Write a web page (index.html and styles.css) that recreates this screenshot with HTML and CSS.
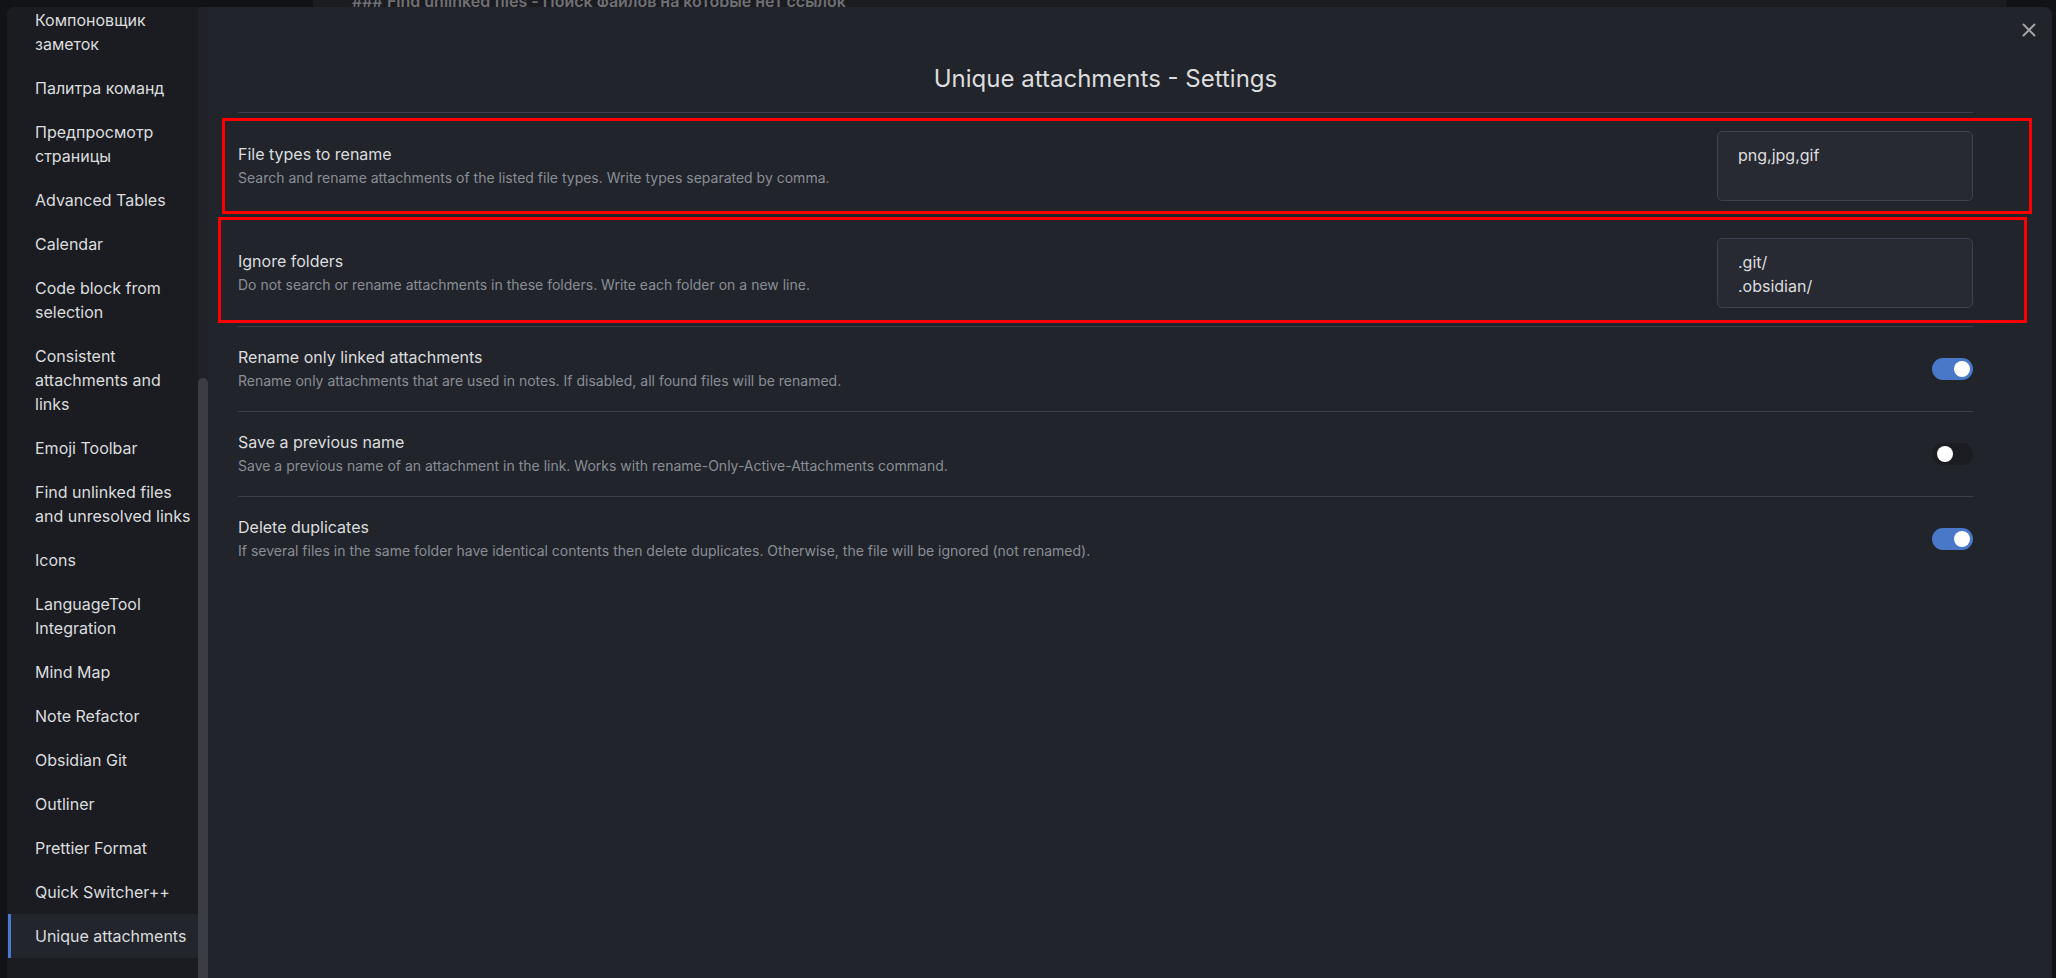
FILE: index.html
```html
<!DOCTYPE html>
<html lang="ru">
<head>
<meta charset="utf-8">
<title>Unique attachments - Settings</title>
<link rel="stylesheet" href="styles.css">
</head>
<body>
  <div class="behind">
    <div class="behind-editor">
      <div class="behind-text">### Find unlinked files - Поиск файлов на которые нет ссылок</div>
    </div>
  </div>

  <div class="modal">
    <aside class="sidebar">
      <nav class="nav">
        <div class="nav-item">Компоновщик<br>заметок</div>
        <div class="nav-item">Палитра команд</div>
        <div class="nav-item">Предпросмотр<br>страницы</div>
        <div class="nav-item">Advanced Tables</div>
        <div class="nav-item">Calendar</div>
        <div class="nav-item">Code block from<br>selection</div>
        <div class="nav-item">Consistent<br>attachments and<br>links</div>
        <div class="nav-item">Emoji Toolbar</div>
        <div class="nav-item">Find unlinked files<br>and unresolved links</div>
        <div class="nav-item">Icons</div>
        <div class="nav-item">LanguageTool<br>Integration</div>
        <div class="nav-item">Mind Map</div>
        <div class="nav-item">Note Refactor</div>
        <div class="nav-item">Obsidian Git</div>
        <div class="nav-item">Outliner</div>
        <div class="nav-item">Prettier Format</div>
        <div class="nav-item">Quick Switcher++</div>
        <div class="nav-item is-active">Unique attachments</div>
      </nav>
    </aside>
    <div class="scroll-track"><div class="scroll-thumb"></div></div>

    <section class="content">
      <button class="close" aria-label="Close">
        <svg width="14" height="14" viewBox="0 0 14 14"><path d="M1.5 1.5 L12.5 12.5 M12.5 1.5 L1.5 12.5" stroke="#a3a3a3" stroke-width="2" stroke-linecap="round" fill="none"/></svg>
      </button>
      <h2 class="title">Unique attachments - Settings</h2>

      <div class="setting">
        <div class="info">
          <div class="name">File types to rename</div>
          <div class="desc">Search and rename attachments of the listed file types. Write types separated by comma.</div>
        </div>
        <textarea class="field" readonly>png,jpg,gif</textarea>
      </div>

      <div class="setting">
        <div class="info">
          <div class="name">Ignore folders</div>
          <div class="desc">Do not search or rename attachments in these folders. Write each folder on a new line.</div>
        </div>
        <textarea class="field" readonly>.git/
.obsidian/</textarea>
      </div>

      <div class="setting">
        <div class="info">
          <div class="name">Rename only linked attachments</div>
          <div class="desc">Rename only attachments that are used in notes. If disabled, all found files will be renamed.</div>
        </div>
        <div class="toggle is-on"></div>
      </div>

      <div class="setting">
        <div class="info">
          <div class="name">Save a previous name</div>
          <div class="desc">Save a previous name of an attachment in the link. Works with rename-Only-Active-Attachments command.</div>
        </div>
        <div class="toggle"></div>
      </div>

      <div class="setting">
        <div class="info">
          <div class="name">Delete duplicates</div>
          <div class="desc">If several files in the same folder have identical contents then delete duplicates. Otherwise, the file will be ignored (not renamed).</div>
        </div>
        <div class="toggle is-on"></div>
      </div>
    </section>
  </div>

  <div class="mark mark-1"></div>
  <div class="mark mark-2"></div>
</body>
</html>
```

FILE: styles.css
```css
html, body {
  margin: 0;
  padding: 0;
}

body {
  width: 2056px;
  height: 978px;
  overflow: hidden;
  position: relative;
  background: #121316;
  font-family: Inter, "Noto Sans", sans-serif;
  color: #dcddde;
}

/* background workspace (under the modal) */
.behind {
  display: flex;
  height: 978px;
}

.behind-editor {
  margin-left: 313px;
  width: 1654px;
  background: #1b1c20;
  padding-left: 39px;
  overflow: hidden;
}

.behind-text {
  margin-top: -9px;
  font-size: 16px;
  line-height: 20px;
  font-weight: 600;
  color: #6f7074;
  white-space: nowrap;
}

/* modal */
.modal {
  position: absolute;
  left: 7px;
  top: 7px;
  width: 2045px;
  height: 1000px;
  display: flex;
  border-radius: 8px;
  overflow: hidden;
  background: #21242b;
}

.sidebar {
  width: 191px;
  flex: none;
  background: #1a1c22;
  overflow: hidden;
}

.nav {
  margin-top: -9px;
}

.nav-item {
  padding: 10px 2px 10px 28px;
  font-size: 16px;
  line-height: 24px;
  color: #dcddde;
  white-space: nowrap;
}

.nav-item.is-active {
  margin-left: 1px;
  padding-left: 27px;
  background: #22252c;
  box-shadow: inset 3px 0 0 #4a78d0;
}

.scroll-track {
  width: 10px;
  flex: none;
  display: flex;
  flex-direction: column;
  background: #1f2228;
}

.scroll-thumb {
  margin-top: 371px;
  flex: 1;
  background: #3a3d43;
  border-radius: 5px 5px 0 0;
}

.content {
  flex: 1;
  position: relative;
  padding: 0 79px 0 30px;
  background: #21242b;
}

.close {
  position: absolute;
  top: 16px;
  right: 16px;
  width: 14px;
  height: 14px;
  padding: 0;
  border: 0;
  background: none;
  display: flex;
}

.title {
  margin: 57px 0 18px;
  font-size: 24px;
  line-height: 30px;
  font-weight: 400;
  text-align: center;
  color: #dcddde;
}

.setting {
  display: flex;
  align-items: center;
  gap: 40px;
  padding: 18px 0;
  border-top: 1px solid #3b3f4a;
}

.info {
  flex: 1;
}

.name {
  font-size: 16px;
  line-height: 24px;
  color: #dcddde;
}

.desc {
  font-size: 14px;
  line-height: 24px;
  color: #8a8e96;
}

.field {
  display: block;
  width: 256px;
  height: 70px;
  box-sizing: border-box;
  padding: 11px 20px;
  margin: 0;
  border: 1px solid #3d424e;
  border-radius: 5px;
  background: #272a33;
  color: #dcddde;
  font-family: Inter, "Noto Sans", sans-serif;
  font-size: 16px;
  line-height: 24px;
  resize: none;
  overflow: hidden;
  outline: none;
}

.toggle {
  width: 41px;
  height: 22px;
  border-radius: 11px;
  background: #1b1d22;
  position: relative;
  flex: none;
}

.toggle::after {
  content: "";
  position: absolute;
  top: 3px;
  left: 5px;
  width: 16px;
  height: 16px;
  border-radius: 50%;
  background: #ffffff;
}

.toggle.is-on {
  background: #4a78c9;
}

.toggle.is-on::after {
  left: auto;
  right: 3px;
}

/* red annotation frames drawn over the screenshot */
.mark {
  position: absolute;
  box-sizing: border-box;
  border: 3px solid #ff0000;
}

.mark-1 {
  left: 222px;
  top: 118px;
  width: 1810px;
  height: 96px;
}

.mark-2 {
  left: 218px;
  top: 217px;
  width: 1809px;
  height: 106px;
}
```
